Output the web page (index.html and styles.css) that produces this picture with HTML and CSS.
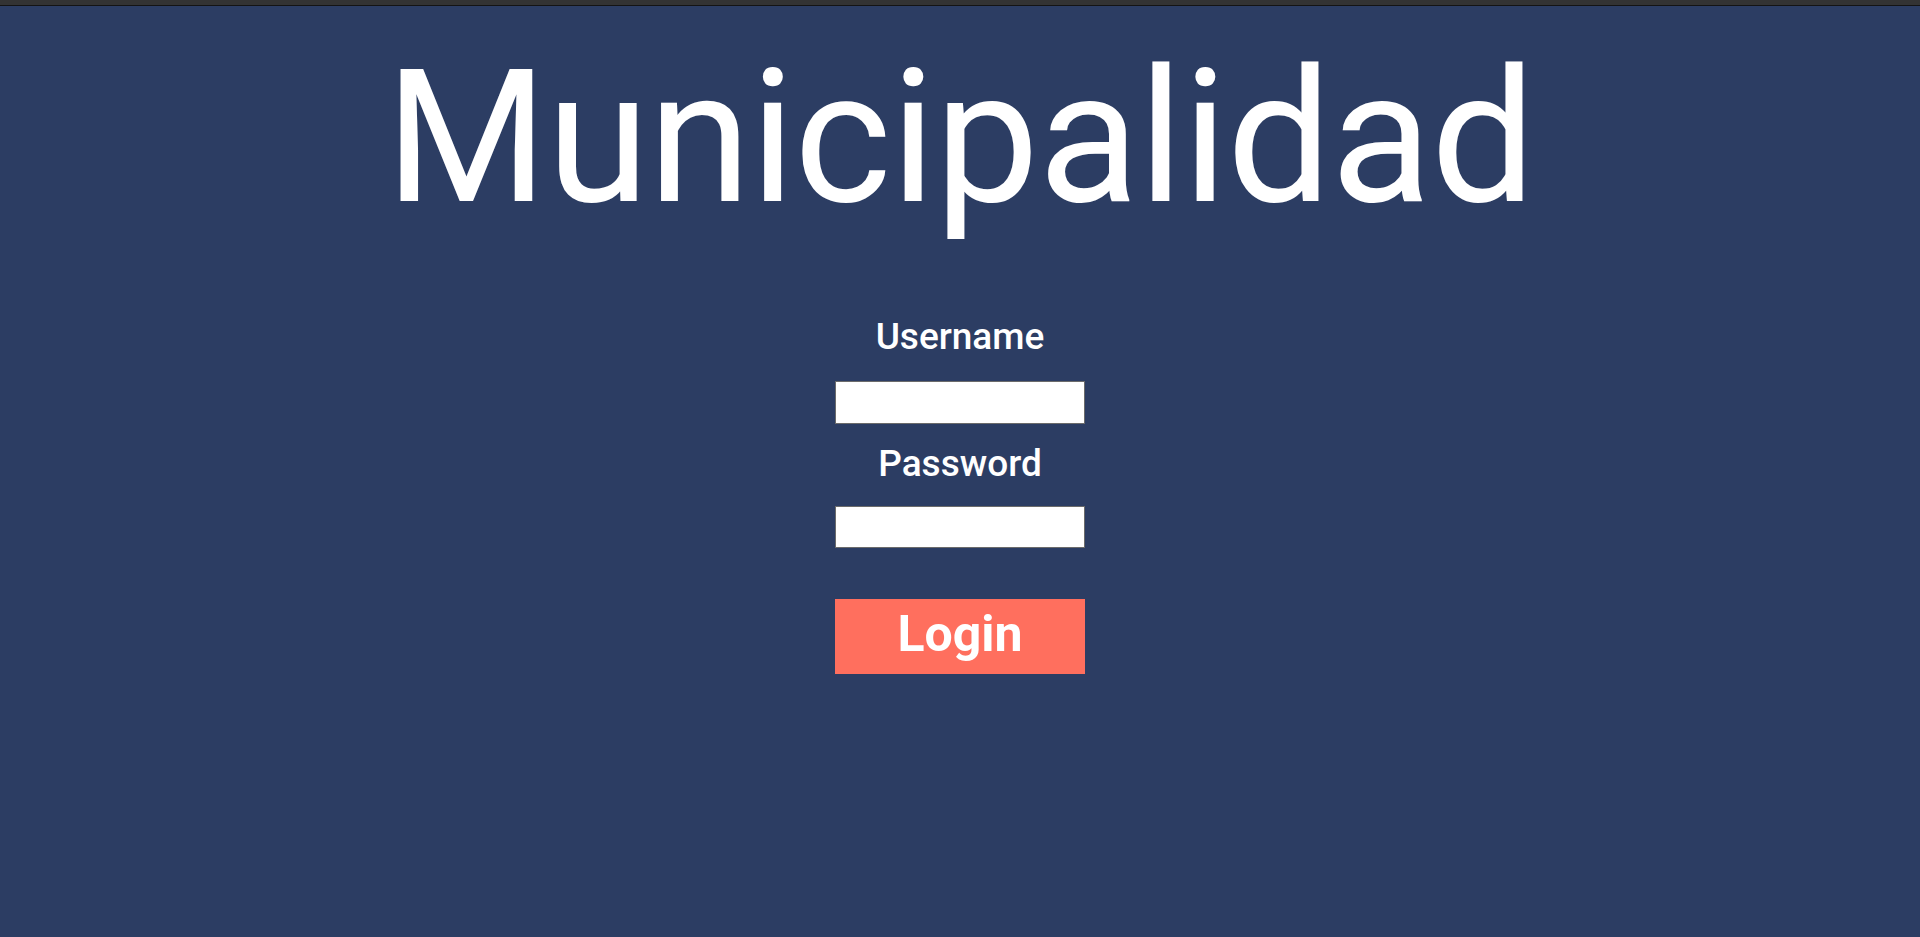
FILE: index.html
```html
<!DOCTYPE html>
<html lang="es">
<head>
<meta charset="utf-8">
<title>Municipalidad</title>
<link rel="stylesheet" href="styles.css">
</head>
<body>
<div class="topbar"></div>
<main class="page">
  <h1 class="title">Municipalidad</h1>
  <form class="login-form">
    <label class="field-label" for="user">Username</label>
    <input class="field-input" id="user" type="text">
    <label class="field-label field-label--pass" for="pass">Password</label>
    <input class="field-input field-input--pass" id="pass" type="password">
    <button class="login-btn" type="button">Login</button>
  </form>
</main>
</body>
</html>
```

FILE: styles.css
```css
html, body {
  margin: 0;
  padding: 0;
  height: 100%;
}
body {
  background: #2c3d63;
  font-family: Roboto, "Liberation Sans", sans-serif;
  color: #ffffff;
}
.topbar {
  height: 5px;
  background: #333333;
  border-bottom: 1px solid #141414;
}
.page {
  display: flex;
  flex-direction: column;
  align-items: center;
}
.title {
  margin: 38px 0 0 0;
  font-size: 186px;
  line-height: 1;
  font-weight: 400;
  letter-spacing: -1px;
  color: #ffffff;
}
.login-form {
  display: flex;
  flex-direction: column;
  align-items: center;
  margin-top: 88px;
}
.field-label {
  font-size: 37px;
  line-height: 1;
  font-weight: 500;
  color: #ffffff;
}
.field-label--pass {
  margin-top: 21px;
}
.field-input {
  box-sizing: border-box;
  width: 250px;
  height: 43px;
  margin-top: 26px;
  background: #ffffff;
  border: 1px solid #6b6b6b;
  outline: none;
  padding: 0 6px;
}
.field-input--pass {
  height: 42px;
  margin-top: 24px;
}
.login-btn {
  box-sizing: border-box;
  width: 250px;
  height: 75px;
  margin-top: 51px;
  background: #ff6f5e;
  border: none;
  color: #ffffff;
  font-family: Roboto, "Liberation Sans", sans-serif;
  font-size: 50px;
  font-weight: 700;
  line-height: 1;
  padding: 0 0 6px 0;
  display: flex;
  align-items: center;
  justify-content: center;
}
```
